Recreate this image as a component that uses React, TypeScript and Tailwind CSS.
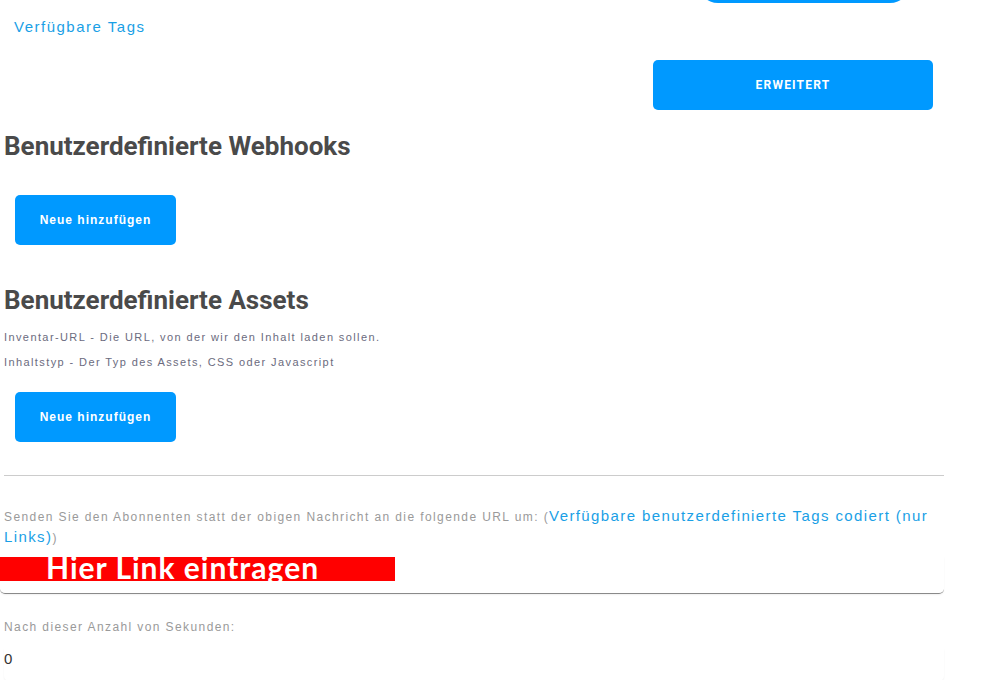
import React from "react";

const arial = { fontFamily: '"Liberation Sans", Arial, sans-serif' };
const roboto = { fontFamily: "Roboto, sans-serif" };

function BlueButton({ label }: { label: string }) {
  return (
    <button
      type="button"
      className="ml-[11px] w-[161px] h-[50px] rounded-[5px] bg-[#0099ff] text-white text-[12px] font-bold tracking-[1px]"
      style={arial}
    >
      {label}
    </button>
  );
}

export default function App() {
  return (
    <div className="w-[944px] bg-white pl-1 text-[#444]" style={arial}>
      {/* pill cut off at top of the viewport */}
      <div className="h-[3px] overflow-hidden">
        <div className="ml-[694px] -mt-[37px] w-[212px] h-[40px] rounded-full bg-[#0099ff]" />
      </div>

      <div className="mt-[14px] ml-[10px] text-[15px] leading-[20px] tracking-[1.5px] text-[#1a9fe6]">
        Verfügbare Tags
      </div>

      <div className="mt-[23px] flex">
        <button
          type="button"
          className="ml-[649px] w-[280px] h-[50px] rounded-[5px] bg-[#0099ff] text-white text-[12px] font-bold tracking-[1.2px] uppercase"
          style={roboto}
        >
          Erweitert
        </button>
      </div>

      <h2 className="mt-[20px] text-[26px] leading-[32px] font-bold text-[#4a4a4a]" style={roboto}>
        Benutzerdefinierte Webhooks
      </h2>
      <div className="mt-[33px]">
        <BlueButton label="Neue hinzufügen" />
      </div>

      <h2 className="mt-[39px] text-[26px] leading-[32px] font-bold text-[#4a4a4a]" style={roboto}>
        Benutzerdefinierte Assets
      </h2>
      <div className="mt-[14px] flex flex-col gap-[10px] text-[11px] leading-[15px] tracking-[1.4px] text-[#6b6b7e]">
        <p>Inventar-URL - Die URL, von der wir den Inhalt laden sollen.</p>
        <p>Inhaltstyp - Der Typ des Assets, CSS oder Javascript</p>
      </div>
      <div className="mt-[22px]">
        <BlueButton label="Neue hinzufügen" />
      </div>

      <hr className="mt-[33px] border-t border-[#cccccc]" />

      <p className="mt-[30px] text-[12px] leading-[19px] tracking-[1.4px] text-[#9a9a9a]">
        Senden Sie den Abonnenten statt der obigen Nachricht an die folgende URL um: (
        <span className="text-[15px] tracking-[1.4px] text-[#1a9fe6]">
          Verfügbare benutzerdefinierte Tags codiert (nur Links)
        </span>
        )
      </p>

      <div className="-ml-1 mt-[9px] rounded-b-[5px] border-b border-[#8a8a8a] pb-[12px] shadow-[0_1px_2px_rgba(0,0,0,0.06)]">
        <div className="w-[395px] h-[24px] overflow-hidden bg-[#ff0000] pl-[46px]">
          <span
            className="block text-[30px] leading-[21px] font-bold tracking-[1px] text-white"
            style={{ fontFamily: "Lato, sans-serif" }}
          >
            Hier Link eintragen
          </span>
        </div>
      </div>

      <p className="mt-[26px] text-[12px] leading-[15px] tracking-[1.4px] text-[#9a9a9a]">
        Nach dieser Anzahl von Sekunden:
      </p>
      <div className="mt-[14px] rounded-b-[5px] pb-[12px] text-[15px] leading-[20px] text-[#333] shadow-[0_1px_2px_rgba(0,0,0,0.06)]">
        0
      </div>
    </div>
  );
}
